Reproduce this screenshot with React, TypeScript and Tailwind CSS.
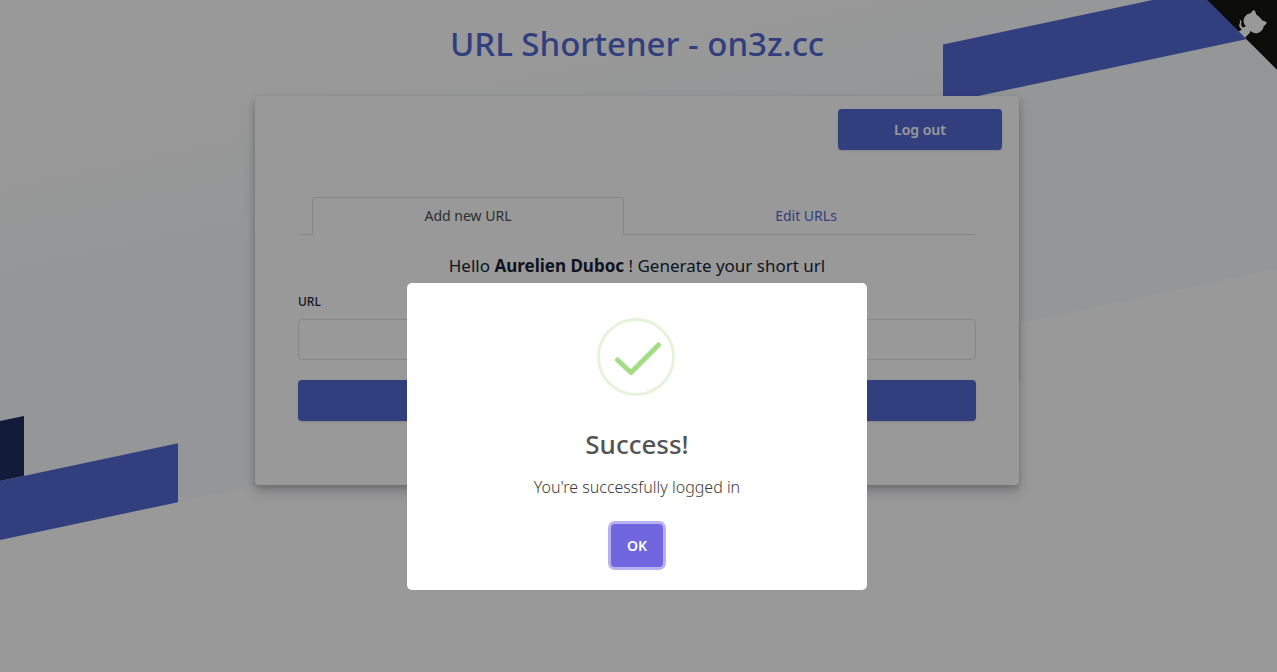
import { useState } from 'react';

function Backdrop() {
  return (
    <svg
      aria-hidden="true"
      className="absolute inset-0 -z-10 h-full w-full"
      viewBox="0 0 1277 672"
      preserveAspectRatio="none"
    >
      <defs>
        <linearGradient id="wash" x1="0" y1="160" x2="0" y2="310" gradientUnits="userSpaceOnUse">
          <stop offset="0" stopColor="#ffffff" />
          <stop offset="1" stopColor="#f7fafc" />
        </linearGradient>
      </defs>
      <g transform="skewY(-12)">
        <rect x="0" y="0" width="1277" height="540" fill="url(#wash)" />
        <rect x="943" y="245" width="334" height="59" fill="#5469d4" />
        <rect x="0" y="421" width="24" height="60" fill="#212d63" />
        <rect x="0" y="481" width="178" height="59" fill="#5469d4" />
        <rect x="900" y="540" width="120" height="59" fill="#e3e8ee" />
      </g>
    </svg>
  );
}

function GithubCorner() {
  return (
    <a href="#source" aria-label="View source on GitHub" className="absolute top-0 right-0">
      <svg viewBox="3 4 250 250" className="block size-[70px] text-white" aria-hidden="true">
        <path d="M0,0 L115,115 L130,115 L142,142 L256,256 L256,0 Z" fill="#151513" />
        <path
          d="M128.3,109.0 C113.8,99.7 119.0,89.6 119.0,89.6 C122.0,82.7 120.5,78.6 120.5,78.6 C119.2,72.0 123.4,76.3 123.4,76.3 C127.3,80.9 125.5,87.3 125.5,87.3 C122.9,97.6 130.6,101.9 134.4,103.2"
          fill="currentColor"
        />
        <path
          d="M115.0,115.0 C114.9,115.1 118.7,116.5 119.8,115.4 L133.7,101.6 C136.9,99.2 139.9,98.4 142.2,98.6 C133.8,88.0 127.5,74.4 143.8,58.0 C148.5,53.4 154.0,51.2 159.7,51.0 C160.3,49.4 163.2,43.6 171.4,40.1 C171.4,40.1 176.1,42.5 178.8,56.2 C183.1,58.6 187.2,61.8 190.9,65.4 C194.5,69.0 197.7,73.2 200.1,77.6 C213.8,80.2 216.3,84.9 216.3,84.9 C212.7,93.1 206.9,96.0 205.4,96.6 C205.1,102.4 203.0,107.8 198.3,112.5 C181.9,128.9 168.3,122.5 157.7,114.1 C157.9,116.9 156.7,120.9 152.7,124.9 L141.0,136.5 C139.8,137.7 141.6,141.9 141.8,141.8 Z"
          fill="currentColor"
        />
      </svg>
    </a>
  );
}

function SuccessDialog({ onClose }: { onClose: () => void }) {
  return (
    <div className="fixed inset-0 flex items-start justify-center bg-black/40 pt-[283px] pr-[3px]">
      <div
        role="dialog"
        aria-modal="true"
        aria-labelledby="dialog-title"
        className="flex w-full max-w-[460px] flex-col items-center rounded-[5px] bg-white pt-[35px] pb-[23px] text-[#545454]"
      >
        <svg viewBox="0 0 80 80" className="size-20" fill="none" aria-hidden="true">
          <circle cx="39" cy="39" r="37.5" stroke="#a5dc86" strokeOpacity="0.3" strokeWidth="3" />
          <path
            d="M20.5 42 L34 54.5 L61.5 27"
            stroke="#a5dc86"
            strokeWidth="5"
            strokeLinecap="round"
            strokeLinejoin="round"
          />
        </svg>
        <h2 id="dialog-title" className="mt-7 text-[26px] leading-9 font-medium">
          Success!
        </h2>
        <p className="mt-[13px] text-base leading-6 font-light text-[#3c3c3c]">
          You're successfully logged in
        </p>
        <button
          type="button"
          onClick={onClose}
          className="mt-[25px] rounded bg-[#7066e0] px-4 py-3 text-sm leading-[19px] font-semibold text-white ring-3 ring-[#7066e0]/50"
        >
          OK
        </button>
      </div>
    </div>
  );
}

export default function App() {
  const [open, setOpen] = useState(true);
  return (
    <div className="relative isolate min-h-screen overflow-hidden bg-white font-['Noto_Sans','Open_Sans',sans-serif] text-[#1a1f36]">
      <Backdrop />
      <div className="flex flex-col items-center pr-[3px]">
        <h1 className="py-5 text-[33px] leading-[48px] font-medium text-[#5469d4]">
          URL Shortener - on3z.cc
        </h1>
        <main className="mt-2 w-full max-w-[764px] rounded bg-white pt-[13px] pb-16 shadow-[0_7px_14px_0_rgba(60,66,87,0.2),0_3px_6px_0_rgba(0,0,0,0.2)]">
          <div className="flex justify-end pr-[17px]">
            <button
              type="button"
              className="h-[41px] w-[164px] rounded bg-[#5469d4] text-sm font-semibold text-white shadow-sm"
            >
              Log out
            </button>
          </div>
          <div className="mx-[43px]">
            <nav className="mx-px mt-[47px] grid grid-cols-2 border-b border-[#dee2e6] text-center text-sm leading-5">
              <a
                href="#add"
                className="mx-[13px] -mb-px h-[38px] rounded-t border border-[#dee2e6] border-b-white bg-white py-2 text-[#495057]"
              >
                Add new URL
              </a>
              <a href="#edit" className="h-[37px] py-[9px] text-[#5469d4]">
                Edit URLs
              </a>
            </nav>
            <p className="mt-[17px] text-center text-[17px] leading-[28px]">
              Hello <b>Aurelien Duboc</b> ! Generate your short url
            </p>
            <form onSubmit={(e) => e.preventDefault()}>
              <label htmlFor="url" className="mt-3 block text-xs leading-5 font-medium">
                URL
              </label>
              <input
                id="url"
                type="url"
                className="mt-[7px] block h-[41px] w-full rounded border border-[#dcdfe4] bg-white px-4 text-base outline-none"
              />
              <button
                type="submit"
                aria-label="Generate short URL"
                className="mt-5 block h-[41px] w-full rounded bg-[#5469d4] shadow-sm"
              />
            </form>
          </div>
        </main>
      </div>
      <GithubCorner />
      {open && <SuccessDialog onClose={() => setOpen(false)} />}
    </div>
  );
}
